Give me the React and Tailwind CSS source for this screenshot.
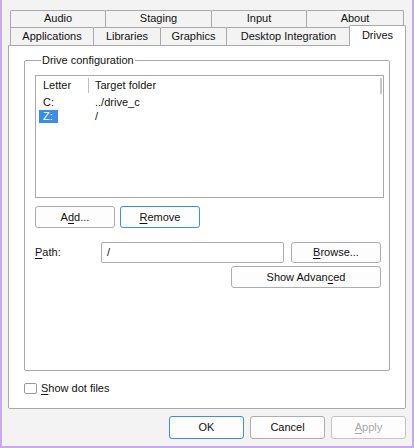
import React from "react";

const U = ({ children }) => <span className="underline underline-offset-2">{children}</span>;

function Tab({ w, children, cls = "" }) {
  return (
    <div
      className={`h-[18px] ${w} shrink-0 -mr-px border border-b-0 border-[#a9a9a9] rounded-t-[2px] flex items-center justify-center ${cls}`}
    >
      {children}
    </div>
  );
}

function Btn({ w, h = "h-[22px]", children, blue, disabled }) {
  return (
    <div
      className={`${w} ${h} shrink-0 rounded-[3px] border flex items-center justify-center bg-[#fdfdfd] ${
        blue ? "border-[#3d8ee6]" : disabled ? "border-[#c4c4c4]" : "border-[#adadad]"
      } ${disabled ? "text-[#a8a8a8]" : ""}`}
    >
      {children}
    </div>
  );
}

export default function App() {
  return (
    <div className="w-[414px] h-[448px] bg-[#f3f3f3] border-x-2 border-b-2 border-[#c9a9f3] font-['Liberation_Sans',sans-serif] text-[11px] leading-none text-[#111] overflow-hidden">
      {/* tabs */}
      <div className="pt-[10px] pl-[8px]">
        <div className="flex">
          <Tab w="w-[96px]" cls="pb-[2px]">Audio</Tab>
          <Tab w="w-[107px]" cls="pb-[2px]">Staging</Tab>
          <Tab w="w-[96px]" cls="pb-[2px]">Input</Tab>
          <Tab w="w-[98px]" cls="pb-[2px]">About</Tab>
        </div>
        <div className="flex -mt-px h-[18px] items-start">
          <Tab w="w-[84px]" cls="pb-[1px]">Applications</Tab>
          <Tab w="w-[68px]" cls="pb-[1px]">Libraries</Tab>
          <Tab w="w-[67px]" cls="pb-[1px]">Graphics</Tab>
          <Tab w="w-[125px]" cls="pb-[1px]">Desktop Integration</Tab>
          <div className="relative z-10 -mt-[2px] -ml-px h-[21px] w-[57px] shrink-0 border border-b-0 border-[#a9a9a9] rounded-t-[2px] bg-white flex items-center justify-center pb-[2px]">
            Drives
          </div>
        </div>
      </div>

      {/* panel */}
      <div className="ml-[6px] w-[398px] h-[364px] border border-[#a9a9a9] rounded-b-[2px] bg-white pl-[15px] pt-[7px]">
        <fieldset className="w-[366px] h-[318px] min-w-0 border border-[#a9a9a9] rounded-[2px] px-[10px] pb-0">
          <legend className="ml-[6px] px-[1px] leading-[14px]">Drive configuration</legend>
          {/* list */}
          <div className="mt-[8px] w-[349px] h-[123px] border border-[#a9a9a9] bg-white">
            <div className="flex h-[18px] items-center pt-[1px]">
              <div className="w-[52px] shrink-0 pl-[7px]">Letter</div>
              <div className="w-px h-[15px] bg-[#bdbdbd]"></div>
              <div className="pl-[6px]">Target folder</div>
              <div className="ml-auto mr-[1px] w-[2px] h-[16px] bg-[#c6c6c6]"></div>
            </div>
            <div className="flex h-[14px] items-center mt-[1px]">
              <div className="w-[59px] shrink-0 pl-[7px]">C:</div>
              <div>../drive_c</div>
            </div>
            <div className="flex h-[14px] items-center">
              <div className="w-[59px] shrink-0 pl-[3px]">
                <span className="inline-flex items-center h-[13px] w-[19px] pl-[4px] bg-[#3b8ce6] text-white">Z:</span>
              </div>
              <div>/</div>
            </div>
          </div>

          {/* add/remove */}
          <div className="flex gap-[5px] mt-[8px]">
            <Btn w="w-[80px]">
              <span>A<U>d</U>d...</span>
            </Btn>
            <Btn w="w-[80px]" blue>
              <span><U>R</U>emove</span>
            </Btn>
          </div>

          {/* path */}
          <div className="flex items-center mt-[14px] w-[346px]">
            <div className="w-[66px] shrink-0"><U>P</U>ath:</div>
            <div className="w-[183px] h-[21px] shrink-0 border border-[#adadad] rounded-[2px] bg-white flex items-center pl-[5px]">/</div>
            <div className="ml-[7px] shrink-0">
              <Btn w="w-[90px]" h="h-[21px]">
                <span><U>B</U>rowse...</span>
              </Btn>
            </div>
          </div>
          <div className="flex mt-[3px] ml-[196px] w-[150px]">
            <Btn w="w-[150px]" h="h-[22px]">
              <span>Show Advan<U>c</U>ed</span>
            </Btn>
          </div>
        </fieldset>

        {/* checkbox */}
        <div className="flex items-center mt-[12px]">
          <div className="w-[13px] h-[11px] border border-[#9a9a9a] rounded-[2px] bg-white"></div>
          <div className="ml-[4px]"><U>S</U>how dot files</div>
        </div>
      </div>

      {/* bottom buttons */}
      <div className="flex justify-end gap-[6px] pr-[6px] mt-[7px]">
        <Btn w="w-[75px]" h="h-[23px]" blue>OK</Btn>
        <Btn w="w-[75px]" h="h-[23px]">Cancel</Btn>
        <Btn w="w-[75px]" h="h-[23px]" disabled>
          <span><U>A</U>pply</span>
        </Btn>
      </div>
    </div>
  );
}
